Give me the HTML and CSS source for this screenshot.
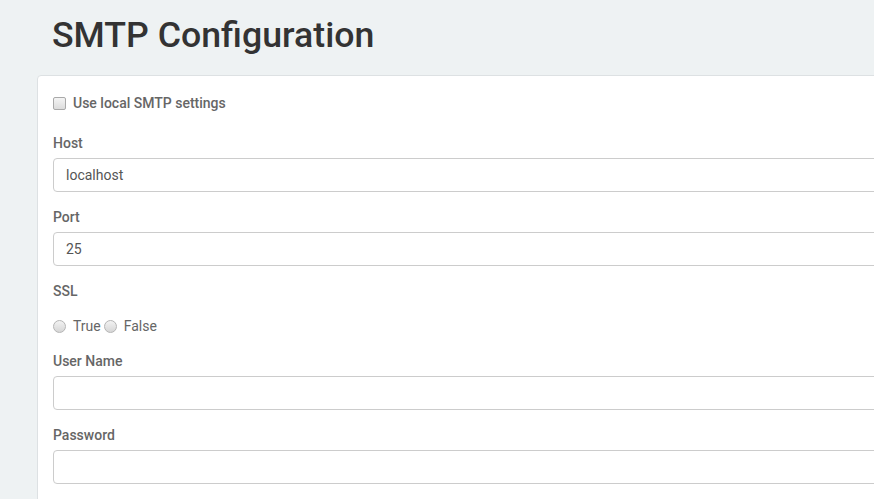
FILE: index.html
```html
<!DOCTYPE html>
<html>
<head>
<meta charset="utf-8">
<link rel="stylesheet" href="styles.css">
</head>
<body>
<div class="page">
  <h1 class="title">SMTP Configuration</h1>
  <div class="card">
    <div class="check-row">
      <span class="checkbox"></span>
      <span class="check-label">Use local SMTP settings</span>
    </div>
    <div class="group">
      <div class="label">Host</div>
      <div class="input">localhost</div>
    </div>
    <div class="group">
      <div class="label">Port</div>
      <div class="input">25</div>
    </div>
    <div class="group">
      <div class="label">SSL</div>
      <div class="radio-row">
        <span class="radio"></span><span class="radio-label">True</span>
        <span class="radio"></span><span class="radio-label">False</span>
      </div>
    </div>
    <div class="group">
      <div class="label">User Name</div>
      <div class="input"></div>
    </div>
    <div class="group">
      <div class="label">Password</div>
      <div class="input"></div>
    </div>
  </div>
</div>
</body>
</html>
```
FILE: styles.css
```css
html, body {
  margin: 0;
  padding: 0;
  overflow: hidden;
  background: #eef2f3;
  font-family: Roboto, "Liberation Sans", sans-serif;
}
.page {
  padding-left: 37px;
  width: 1000px;
}
.title {
  margin: 0;
  padding: 13px 0 0 15px;
  height: 75px;
  box-sizing: border-box;
  font-size: 35.7px;
  font-weight: 500;
  line-height: 44px;
  color: #333;
}
.card {
  background: #fff;
  border: 1px solid #dde1e3;
  border-radius: 4px;
  padding: 17px 15px 15px 15px;
  height: 500px;
}
.check-row {
  display: flex;
  align-items: center;
  height: 20px;
  margin-bottom: 20px;
}
.checkbox {
  width: 11px;
  height: 11px;
  border: 1px solid #a9a9a9;
  border-radius: 2px;
  background: linear-gradient(#f4f4f4, #dcdcdc);
  margin-right: 7px;
}
.check-label {
  font-size: 14px;
  font-weight: 500;
  color: #666;
}
.group {
  margin-bottom: 15px;
}
.label {
  font-size: 14px;
  font-weight: 500;
  color: #666;
  line-height: 20px;
  margin-bottom: 5px;
}
.input {
  height: 34px;
  box-sizing: border-box;
  border: 1px solid #ccc;
  border-radius: 4px;
  padding: 0 12px;
  font-size: 14px;
  line-height: 32px;
  color: #555;
}
.radio-row {
  display: flex;
  align-items: center;
  height: 20px;
  margin-top: 15px;
  margin-bottom: 14px;
}
.radio {
  width: 11px;
  height: 11px;
  border: 1px solid #b5b5b5;
  border-radius: 50%;
  background: linear-gradient(#f2f2f2, #d6d6d6);
  margin-right: 7px;
}
.radio-label {
  font-size: 14px;
  color: #666;
  margin-right: 3px;
}
```
